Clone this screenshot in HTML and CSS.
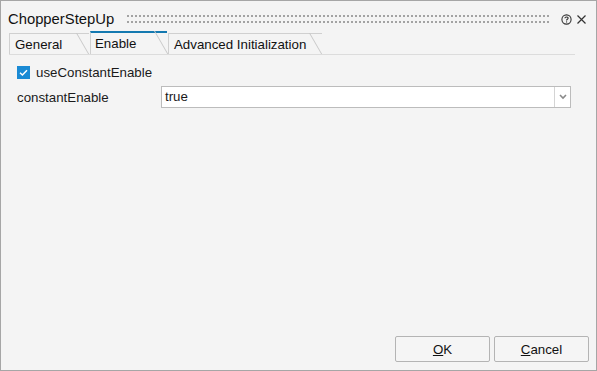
FILE: index.html
```html
<!DOCTYPE html>
<html lang="en">
<head>
    <meta charset="UTF-8">
    <title>ChopperStepUp</title>
    <link rel="stylesheet" href="styles.css">
</head>
<body>
<div class="dialog">
    <div class="titlebar">
        <span class="title">ChopperStepUp</span>
        <svg class="grip" height="8">
            <defs>
                <pattern id="dots" width="4" height="6" patternUnits="userSpaceOnUse">
                    <rect width="2" height="2" fill="#a3a3a3"/>
                </pattern>
            </defs>
            <rect width="100%" height="8" fill="url(#dots)"/>
        </svg>
        <svg class="icon" width="11" height="11" viewBox="0 0 11 11">
            <circle cx="5.5" cy="5.5" r="4.6" fill="none" stroke="#333" stroke-width="1.1"/>
            <path d="M3.9 4.3 C3.9 2.6 7.1 2.6 7.1 4.2 C7.1 5.3 5.5 5.3 5.5 6.6" fill="none" stroke="#333" stroke-width="1.1"/>
            <rect x="5" y="7.4" width="1.1" height="1.1" fill="#333"/>
        </svg>
        <svg class="icon" width="11" height="11" viewBox="0 0 11 11">
            <path d="M1.5 1.5 L9.5 9.5 M9.5 1.5 L1.5 9.5" stroke="#333" stroke-width="1.2"/>
        </svg>
    </div>

    <div class="tabs">
        <div class="tab tab-general">General</div>
        <div class="tab tab-enable active">Enable</div>
        <div class="tab tab-advanced">Advanced Initialization</div>
    </div>

    <div class="content">
        <label class="check-row">
            <span class="checkbox">
                <svg width="13" height="13" viewBox="0 0 13 13">
                    <path d="M3 6.8 L5.4 9 L10 4.2" fill="none" stroke="#fff" stroke-width="1.5"/>
                </svg>
            </span>
            useConstantEnable
        </label>
        <div class="field-row">
            <span class="field-label">constantEnable</span>
            <div class="combo">
                <span class="combo-value">true</span>
                <span class="combo-button">
                    <svg width="8" height="6" viewBox="0 0 8 6">
                        <path d="M1 1 L4 4 L7 1" fill="none" stroke="#8a8a8a" stroke-width="1.6"/>
                    </svg>
                </span>
            </div>
        </div>
    </div>

    <div class="buttons">
        <button><u>O</u>K</button>
        <button><u>C</u>ancel</button>
    </div>
</div>
</body>
</html>
```

FILE: styles.css
```css
html, body {
    margin: 0;
    padding: 0;
}
body {
    width: 597px;
    height: 371px;
    font-family: "Liberation Sans", Arial, sans-serif;
    font-size: 13.3px;
    color: #1a1a1a;
}
.dialog {
    box-sizing: border-box;
    width: 597px;
    height: 371px;
    border: 1px solid #a6a6a6;
    background-color: #f4f4f4;
    display: flex;
    flex-direction: column;
}
.titlebar {
    display: flex;
    align-items: center;
    height: 30px;
    padding: 0 9px 0 7px;
}
.title {
    font-size: 14.8px;
    color: #111;
    margin-top: 5px;
}
.grip {
    flex: 1;
    margin: 6px 6px 0 13px;
}
.icon {
    margin-top: 6px;
    margin-left: 4px;
}
.tabs {
    display: flex;
    align-items: flex-end;
    height: 23px;
    margin: 0 21px 0 8px;
    border-bottom: 1px solid #dcdcdc;
}
.tab {
    position: relative;
    box-sizing: border-box;
    height: 21px;
    line-height: 21px;
    padding-left: 5px;
    border-left: 1px solid #d0d0d0;
    border-top: 1px solid #d0d0d0;
    color: #111;
}
.tab::after {
    content: "";
    position: absolute;
    right: 12px;
    top: -1px;
    width: 10px;
    height: 21px;
    border-right: 1px solid #c8c8c8;
    transform: skewX(30deg);
    transform-origin: top left;
}
.tab-general {
    width: 80px;
    margin-right: 1px;
}
.tab-enable {
    width: 77px;
    margin-right: 1px;
    padding-left: 4px;
}
.tab-advanced {
    width: 154px;
}
.tab.active {
    height: 23px;
    line-height: 22px;
    border-top: 2px solid #1479b0;
}
.tab.active::after {
    top: -2px;
    height: 23px;
}
.content {
    flex: 1;
    padding: 10px 25px 0 15px;
}
.check-row {
    display: flex;
    align-items: center;
    gap: 6px;
    height: 15px;
    padding-left: 1px;
}
.checkbox {
    width: 13px;
    height: 13px;
    background-color: #1a8ad4;
    display: flex;
}
.field-row {
    display: flex;
    align-items: center;
    margin-top: 6px;
    padding-left: 1px;
}
.field-label {
    width: 144px;
}
.combo {
    flex: 1;
    display: flex;
    height: 22px;
    box-sizing: border-box;
    border: 1px solid #bcbcbc;
    background-color: #fff;
}
.combo-value {
    flex: 1;
    padding-left: 3px;
    line-height: 20px;
}
.combo-button {
    width: 15px;
    border-left: 1px solid #d4d4d4;
    display: flex;
    align-items: center;
    justify-content: center;
}
.buttons {
    display: flex;
    justify-content: flex-end;
    gap: 4px;
    padding: 0 7px 8px 0;
}
button {
    width: 95px;
    height: 26px;
    background-color: #f5f5f5;
    border: 1px solid #b4b4b4;
    border-radius: 2px;
    font-family: "Liberation Sans", Arial, sans-serif;
    font-size: 13.3px;
    color: #111;
    padding: 0;
}
```
